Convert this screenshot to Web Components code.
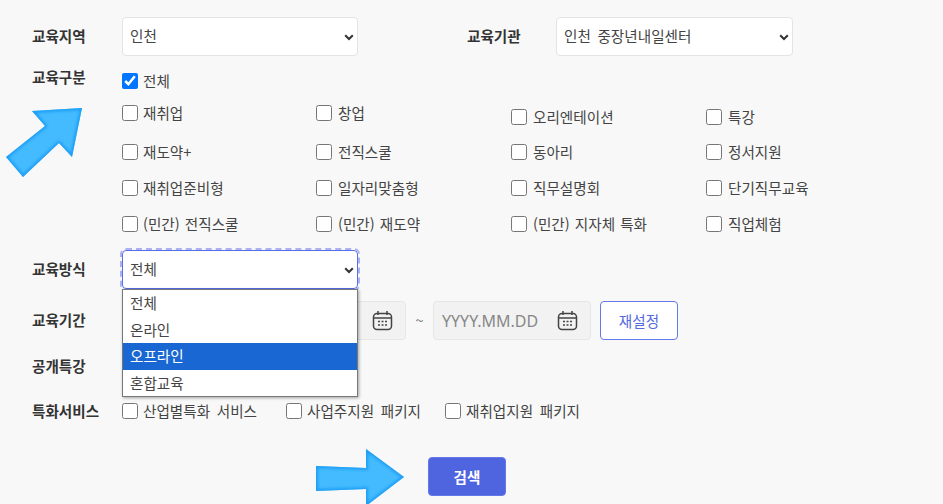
<!DOCTYPE html>
<html lang="ko">
<head>
<meta charset="utf-8">
<title>교육 검색</title>
<style>
  html, body { margin: 0; height: 100%; overflow: hidden; background: #f8f8f8; }
  body { font-family: "Noto Sans CJK KR", "Noto Sans", sans-serif; font-size: 14.6px; color: #444; word-spacing: 2.5px; }
  .date-row { display: flex; align-items: center; margin-left: 126px; }
  .tilde { width: 27px; text-align: center; color: #777; padding-bottom: 2px; }
  x-date + .tilde + x-date { margin-right: 9px; }
  .checks { display: grid; grid-template-columns: 194px 195px 195px 195px; grid-template-rows: 32px 39px 36px 36px 20px; padding-top: 3px; }
  .checks x-check { --gap: 6px; }
  .checks x-check:nth-child(4n+2), .checks .all { --gap: 5px; }
  .all { grid-column: 1 / -1; }
  .low { padding-top: 4px; }
  .private { word-spacing: 1px; }
  .services { display: flex; height: 20px; }
  .services x-check:nth-child(1) { width: 164px; }
  .services x-check:nth-child(2) { width: 159px; }
</style>
</head>
<body>
<search-form>
  <form-row label="교육지역" lift style="height:39px">
    <div style="display:flex;align-items:center">
      <x-select value="인천"></x-select>
      <span style="width:109px"></span>
      <b style="width:89px;color:#333;padding-bottom:2px">교육기관</b>
      <x-select value="인천 중장년내일센터" style="width:237px"></x-select>
    </div>
  </form-row>
  <form-row label="교육구분" top style="margin-top:12px">
    <div class="checks">
      <x-check class="all" checked>전체</x-check>
      <x-check>재취업</x-check><x-check>창업</x-check><x-check class="low">오리엔테이션</x-check><x-check class="low">특강</x-check>
      <x-check>재도약+</x-check><x-check>전직스쿨</x-check><x-check>동아리</x-check><x-check>정서지원</x-check>
      <x-check>재취업준비형</x-check><x-check>일자리맞춤형</x-check><x-check>직무설명회</x-check><x-check>단기직무교육</x-check>
      <x-check class="private">(민간) 전직스쿨</x-check><x-check class="private">(민간) 재도약</x-check><x-check class="private">(민간) 지자체 특화</x-check><x-check>직업체험</x-check>
    </div>
  </form-row>
  <form-row label="교육방식" lift style="height:39px;margin-top:16px;position:relative;z-index:2">
    <x-select value="전체" focused>
      <x-option>전체</x-option>
      <x-option>온라인</x-option>
      <x-option selected>오프라인</x-option>
      <x-option>혼합교육</x-option>
    </x-select>
  </form-row>
  <form-row label="교육기간" lift style="height:39px;margin-top:12px">
    <div class="date-row">
      <x-date></x-date><span class="tilde">~</span><x-date placeholder="YYYY.MM.DD"></x-date>
      <x-button>재설정</x-button>
    </div>
  </form-row>
  <form-row label="공개특강" style="height:20px;margin-top:16px"></form-row>
  <form-row label="특화서비스" style="height:20px;margin-top:25px">
    <div class="services">
      <x-check>산업별특화 서비스</x-check><x-check>사업주지원 패키지</x-check><x-check>재취업지원 패키지</x-check>
    </div>
  </form-row>
  <x-button primary style="margin:36px 0 0 396px">검색</x-button>
</search-form>
<x-arrow points="32,111 82,108 72,157 59,143 23,177 6,157 45,126"></x-arrow>
<x-arrow points="316,466 366,468 366,449 404,477 366,506 366,489 316,491"></x-arrow>
<script>
class SearchForm extends HTMLElement {
  constructor() {
    super();
    this.attachShadow({ mode: "open" });
    this.shadowRoot.innerHTML = `
      <style>
        :host { display: block; padding: 17px 0 0 32px; }
      </style>
      <slot></slot>
    `;
  }
}

class FormRow extends HTMLElement {
  constructor() {
    super();
    this.attachShadow({ mode: "open" });
    this.shadowRoot.innerHTML = `
      <style>
        :host { display: grid; grid-template-columns: 90px 1fr; align-items: center; }
        :host([top]) { align-items: start; }
        :host([lift]) b { padding-bottom: 2px; }
        :host([top]) b { margin-top: -1px; }
        b { font-weight: 700; color: #333; line-height: 20px; white-space: nowrap; word-spacing: 0; }
      </style>
      <b>${this.getAttribute("label")}</b>
      <div><slot></slot></div>
    `;
  }
}

class XSelect extends HTMLElement {
  constructor() {
    super();
    this.attachShadow({ mode: "open" });
    this.shadowRoot.innerHTML = `
      <style>
        :host { display: block; position: relative; width: 236px; height: 39px; box-sizing: border-box; }
        .box {
          display: flex; align-items: center; justify-content: space-between;
          height: 100%; box-sizing: border-box; padding: 0 2.5px 2px 7px;
          background: #fff; border: 1px solid #e4e4e4; border-radius: 4px; color: #444;
        }
        :host([focused]) .box { border-color: #5a6ee6; outline: 2px dashed #aab2f4; outline-offset: 0; }
        svg { width: 12px; height: 12px; margin-top: 2px; }
        .list {
          position: absolute; left: 0; top: 39px; width: 236px; box-sizing: border-box;
          background: #fff; border: 1px solid #777; box-shadow: 1px 1px 3px rgba(0,0,0,.35);
        }
      </style>
      <div class="box">
        <span>${this.getAttribute("value")}</span>
        <svg viewBox="0 0 12 12"><path d="M2.2 4.2 6 8l3.8-3.8" fill="none" stroke="#333" stroke-width="2"/></svg>
      </div>
    `;
    if (this.hasAttribute("focused")) {
      const list = document.createElement("div");
      list.className = "list";
      list.innerHTML = "<slot></slot>";
      this.shadowRoot.appendChild(list);
    }
  }
}

class XOption extends HTMLElement {
  constructor() {
    super();
    this.attachShadow({ mode: "open" });
    this.shadowRoot.innerHTML = `
      <style>
        :host { display: block; height: 26.6px; line-height: 26.6px; padding-left: 7px; color: #444; }
        :host([selected]) { background: #1967d2; color: #fff; }
      </style>
      <slot></slot>
    `;
  }
}

class XCheck extends HTMLElement {
  constructor() {
    super();
    this.attachShadow({ mode: "open" });
    this.shadowRoot.innerHTML = `
      <style>
        :host { display: block; }
        label { display: flex; align-items: flex-start; gap: var(--gap, 5px); height: 20px; line-height: 19px; white-space: nowrap; color: #444; }
        input { width: 16px; height: 16px; margin: 2px 0 0; flex: none; }
      </style>
      <label><input type="checkbox"><slot></slot></label>
    `;
    this.shadowRoot.querySelector("input").checked = this.hasAttribute("checked");
  }
}

class XDate extends HTMLElement {
  constructor() {
    super();
    this.attachShadow({ mode: "open" });
    this.shadowRoot.innerHTML = `
      <style>
        :host {
          display: flex; align-items: center; justify-content: space-between;
          width: 158px; height: 39px; box-sizing: border-box; padding: 0 12px 0 8px;
          background: #f2f2f2; border: 1px solid #e6e6e6; border-radius: 4px; color: #888;
          font-family: "Noto Sans", sans-serif; font-size: 16px;
        }
        svg { width: 21px; height: 21px; margin-left: auto; }
      </style>
      <span>${this.getAttribute("placeholder") || ""}</span>
      <svg viewBox="0 0 21 21" fill="none" stroke="#444" stroke-width="1.5">
        <rect x="1.5" y="3.5" width="18" height="16" rx="3.5"/>
        <path d="M1.5 8h18M6 1v4M15 1v4"/>
        <path d="M6 11.5h2M9.5 11.5h2M13 11.5h2M6 15h2M9.5 15h2M13 15h2" stroke-width="1.3"/>
      </svg>
    `;
  }
}

class XButton extends HTMLElement {
  constructor() {
    super();
    this.attachShadow({ mode: "open" });
    this.shadowRoot.innerHTML = `
      <style>
        :host {
          display: flex; align-items: center; justify-content: center;
          width: 78px; height: 39px; box-sizing: border-box; padding-bottom: 1px;
          background: #fff; border: 1px solid #6478e8; border-radius: 4px; color: #5468e0;
        }
        :host([primary]) { background: #4f65df; color: #fff; font-weight: 700; }
      </style>
      <slot></slot>
    `;
  }
}

class XArrow extends HTMLElement {
  constructor() {
    super();
    this.attachShadow({ mode: "open" });
    const points = this.getAttribute("points");
    this.shadowRoot.innerHTML = `
      <style>
        :host { position: absolute; left: 0; top: 0; width: 943px; height: 504px; pointer-events: none; }
        svg { display: block; }
      </style>
      <svg width="943" height="504">
        <defs>
          <clipPath id="shape"><polygon points="${points}"/></clipPath>
          <filter id="soft" x="-20%" y="-20%" width="140%" height="140%"><feGaussianBlur stdDeviation="1.5"/></filter>
        </defs>
        <polygon points="${points}" fill="#45bbff"/>
        <g clip-path="url(#shape)">
          <polygon points="${points}" fill="none" stroke="#1d9df5" stroke-width="4" filter="url(#soft)"/>
        </g>
      </svg>
    `;
  }
}

customElements.define("search-form", SearchForm);
customElements.define("form-row", FormRow);
customElements.define("x-select", XSelect);
customElements.define("x-option", XOption);
customElements.define("x-check", XCheck);
customElements.define("x-date", XDate);
customElements.define("x-button", XButton);
customElements.define("x-arrow", XArrow);
</script>
</body>
</html>
